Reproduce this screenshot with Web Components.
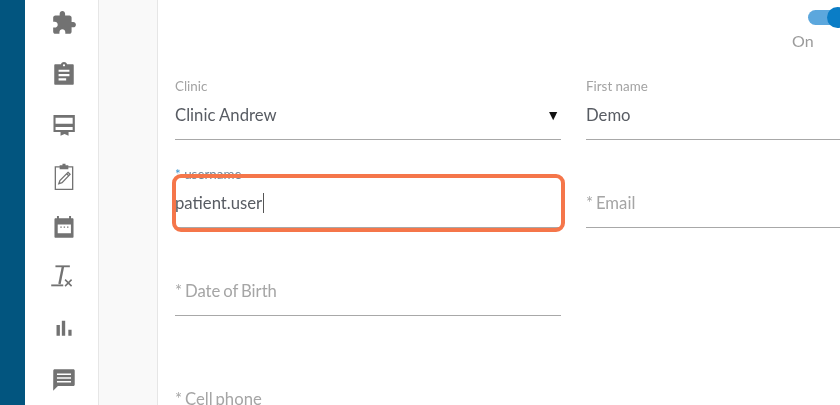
<!DOCTYPE html>
<html>
<head>
<meta charset="utf-8">
<title>Patient form</title>
<style>
    html, body {
        margin: 0;
        padding: 0;
    }
    body {
        width: 840px;
        height: 405px;
        overflow: hidden;
        font-family: Lato, "Liberation Sans", sans-serif;
    }
</style>
</head>
<body>
<app-shell>
    <side-nav slot="nav">
        <nav-icon name="extension"></nav-icon>
        <nav-icon name="assignment"></nav-icon>
        <nav-icon name="card"></nav-icon>
        <nav-icon name="clipboard"></nav-icon>
        <nav-icon name="calendar"></nav-icon>
        <nav-icon name="rx"></nav-icon>
        <nav-icon name="chart"></nav-icon>
        <nav-icon name="chat"></nav-icon>
    </side-nav>
    <on-toggle>On</on-toggle>
    <form-grid>
        <form-field label="Clinic" value="Clinic Andrew" select></form-field>
        <form-field label="First name" value="Demo"></form-field>
        <form-field label="username" value="patient.user" focused highlight></form-field>
        <form-field placeholder="* Email"></form-field>
        <form-field placeholder="* Date of Birth"></form-field>
    </form-grid>
    <form-field class="phone" placeholder="* Cell phone"></form-field>
</app-shell>

<script>
class AppShell extends HTMLElement {
    constructor() {
        super();
        this.shadowDOM = this.attachShadow({mode: "open"});
        this.shadowDOM.innerHTML = `
            <style>
                :host {
                    display: flex;
                    width: 840px;
                    height: 405px;
                    overflow: hidden;
                    background: #fff;
                    filter: blur(0.35px);
                }
                .brand {
                    flex: none;
                    width: 25px;
                    background: #02557f;
                }
                .gutter {
                    flex: none;
                    width: 58px;
                    background: #f9f9f9;
                    border-left: 1px solid #e6e6e6;
                    border-right: 1px solid #e6e6e6;
                }
                main {
                    flex: none;
                    width: 800px;
                    padding: 0 0 0 17px;
                }
                ::slotted(.phone) {
                    margin-top: 34px;
                    width: 386px;
                }
            </style>
            <div class="brand"></div>
            <slot name="nav"></slot>
            <div class="gutter"></div>
            <main><slot></slot></main>`;
    }
}

class SideNav extends HTMLElement {
    constructor() {
        super();
        this.shadowDOM = this.attachShadow({mode: "open"});
        this.shadowDOM.innerHTML = `
            <style>
                :host {
                    display: flex;
                    flex: none;
                    flex-direction: column;
                    align-items: center;
                    box-sizing: border-box;
                    width: 73px;
                    padding-left: 4px;
                    margin-top: -3px;
                }
            </style>
            <slot></slot>`;
    }
}

const ICONS = {
    extension: `<path d="M20.5 11H19V7c0-1.1-.9-2-2-2h-4V3.5C13 2.12 11.88 1 10.5 1S8 2.12 8 3.5V5H4c-1.1 0-1.99.9-1.99 2v3.8H3.5c1.49 0 2.7 1.21 2.7 2.7s-1.21 2.7-2.7 2.7H2V20c0 1.1.9 2 2 2h3.8v-1.5c0-1.49 1.21-2.7 2.7-2.7 1.49 0 2.7 1.21 2.7 2.7V22H17c1.1 0 2-.9 2-2v-4h1.5c1.38 0 2.5-1.12 2.5-2.5S21.88 11 20.5 11z"/>`,
    assignment: `<path d="M20 3h-5.18C14.4 1.84 13.3 1 12 1c-1.3 0-2.4.84-2.82 2H4c-.6 0-1 .4-1 1v17c0 .6.4 1 1 1h16c.6 0 1-.4 1-1V4c0-.6-.4-1-1-1zm-8 0c.55 0 1 .45 1 1s-.45 1-1 1-1-.45-1-1 .45-1 1-1zm2 15H7v-2h7v2zm3-4H7v-2h10v2zm0-4H7V8h10v2z"/>`,
    card: `<path fill-rule="evenodd" d="M2.3 2.8H22v15.7h-5.8V22l-3.7-1.8L8.8 22v-3.5H2.3zM4.2 5.2v5.6H20V5.2zM4.2 13.8v2.9H20v-2.9z"/>`,
    clipboard: `<path fill-rule="evenodd" d="M3.4 3H8V2h2.6V.8h2.8V2H16v1h4.6v22H3.4zM4.6 4.2v19.6h14.8V4.2H16V5.8H8V4.2z"/>
        <path d="M15.7 8.6l1.9 1.9-7.4 7.6-3 1 1-2.9zM14.5 9.9l1.9 1.9" fill="none" stroke="currentColor" stroke-width="1.2"/>`,
    calendar: `<path fill-rule="evenodd" d="M4.2 4H5.5V1.8h1.8V4h9.4V1.8h1.8V4h1.3c.6 0 1 .4 1 1v16c0 .6-.4 1-1 1H4.2c-.6 0-1-.4-1-1V5c0-.6.4-1 1-1zM6.2 9.6v8.2h12.2V9.6zM8.6 11.5h1.3v1.3H8.6zM11.7 11.5h1.3v1.3h-1.3zM14.8 11.5h1.3v1.3h-1.3z"/>`,
    rx: `<path d="M4.1 1.2h13.3" fill="none" stroke="currentColor" stroke-width="1.7"/>
        <path d="M11.1 1.2L7.8 17.5" fill="none" stroke="currentColor" stroke-width="2.2"/>
        <path d="M.2 18.8h11.1" fill="none" stroke="currentColor" stroke-width="1.7"/>
        <path d="M13 13.5l6 6M19 13.5l-6 6" fill="none" stroke="currentColor" stroke-width="1.4"/>`,
    chart: `<path d="M5.1 8.3h3.1v9.9H5.1zM10 4.3h3.1v13.9H10zM16 12.6h3v5.6h-3z"/>`,
    chat: `<path fill-rule="evenodd" d="M20.5 2.1h-17c-.9 0-1.4.5-1.4 1.4L2 22l4.4-4.5h14.1c.9 0 1.4-.5 1.4-1.4V3.5c0-.9-.5-1.4-1.4-1.4zM18.5 14.4h-13V13h13zm0-3.5h-13V9.5h13zm0-3.5h-13V6h13z"/>`
};

class NavIcon extends HTMLElement {
    constructor() {
        super();
        this.shadowDOM = this.attachShadow({mode: "open"});
    }

    connectedCallback() {
        this.shadowDOM.innerHTML = `
            <style>
                :host {
                    display: flex;
                    align-items: center;
                    justify-content: center;
                    flex: none;
                    width: 69px;
                    height: 51px;
                    color: #727272;
                }
                svg {
                    width: 26px;
                    height: 26px;
                    fill: currentColor;
                    overflow: visible;
                }
            </style>
            <svg viewBox="0 0 24 24">${ICONS[this.getAttribute("name")]}</svg>`;
    }
}

class OnToggle extends HTMLElement {
    constructor() {
        super();
        this.shadowDOM = this.attachShadow({mode: "open"});
        this.shadowDOM.innerHTML = `
            <style>
                :host {
                    display: flex;
                    flex-direction: column;
                    align-items: flex-start;
                    gap: 6px;
                    height: 66px;
                    padding: 10px 0 0 617px;
                    box-sizing: border-box;
                    font-size: 16px;
                    line-height: 19px;
                    color: #9b9b9b;
                }
                .track {
                    position: relative;
                    width: 36px;
                    height: 15px;
                    margin-left: 16px;
                    border-radius: 8px;
                    background: #5ca7dd;
                }
                .thumb {
                    position: absolute;
                    left: 19px;
                    top: -3px;
                    width: 21px;
                    height: 21px;
                    border-radius: 50%;
                    background: #0a7dc6;
                }
            </style>
            <div class="track"><div class="thumb"></div></div>
            <div><slot></slot></div>`;
    }
}

class FormGrid extends HTMLElement {
    constructor() {
        super();
        this.shadowDOM = this.attachShadow({mode: "open"});
        this.shadowDOM.innerHTML = `
            <style>
                :host {
                    display: grid;
                    grid-template-columns: 386px 386px;
                    column-gap: 25px;
                    row-gap: 14px;
                }
            </style>
            <slot></slot>`;
    }
}

class FormField extends HTMLElement {
    constructor() {
        super();
        this.shadowDOM = this.attachShadow({mode: "open"});
    }

    connectedCallback() {
        const label = this.getAttribute("label");
        const value = this.getAttribute("value");
        const placeholder = this.getAttribute("placeholder");
        const focused = this.hasAttribute("focused");
        this.shadowDOM.innerHTML = `
            <style>
                :host {
                    display: block;
                    position: relative;
                    box-sizing: border-box;
                    height: 74px;
                    padding-top: 12px;
                    border-bottom: 1px solid #a8a8a8;
                }
                .label {
                    height: 16px;
                    font-size: 13.4px;
                    line-height: 16px;
                    color: #a3a3a3;
                }
                :host([focused]) .label {
                    color: #71889a;
                }
                .star {
                    color: #3f97d2;
                }
                .value {
                    display: flex;
                    justify-content: space-between;
                    align-items: center;
                    height: 24px;
                    margin-top: 9px;
                    font-size: 16.7px;
                    line-height: 24px;
                    color: #585c63;
                }
                .placeholder {
                    color: #a5a5a5;
                    word-spacing: -1.4px;
                }
                .arrow {
                    font-size: 14px;
                    color: #111;
                    margin-right: 1px;
                }
                .caret {
                    display: inline-block;
                    width: 1px;
                    height: 20px;
                    margin-left: 1px;
                    vertical-align: -4px;
                    background: #555;
                }
                .highlight {
                    position: absolute;
                    left: -3px;
                    right: -4px;
                    top: 20px;
                    height: 50px;
                    border: 4px solid #f5764a;
                    border-radius: 9px;
                }
            </style>
            <div class="label">${focused ? '<span class="star">*</span> ' : ""}${label || ""}</div>
            <div class="value">
                <span class="${placeholder ? "placeholder" : ""}">${value || placeholder}${focused ? '<span class="caret"></span>' : ""}</span>
                ${this.hasAttribute("select") ? '<span class="arrow">▼</span>' : ""}
            </div>
            ${this.hasAttribute("highlight") ? '<div class="highlight"></div>' : ""}`;
    }
}

customElements.define("app-shell", AppShell);
customElements.define("side-nav", SideNav);
customElements.define("nav-icon", NavIcon);
customElements.define("on-toggle", OnToggle);
customElements.define("form-grid", FormGrid);
customElements.define("form-field", FormField);
</script>
</body>
</html>
